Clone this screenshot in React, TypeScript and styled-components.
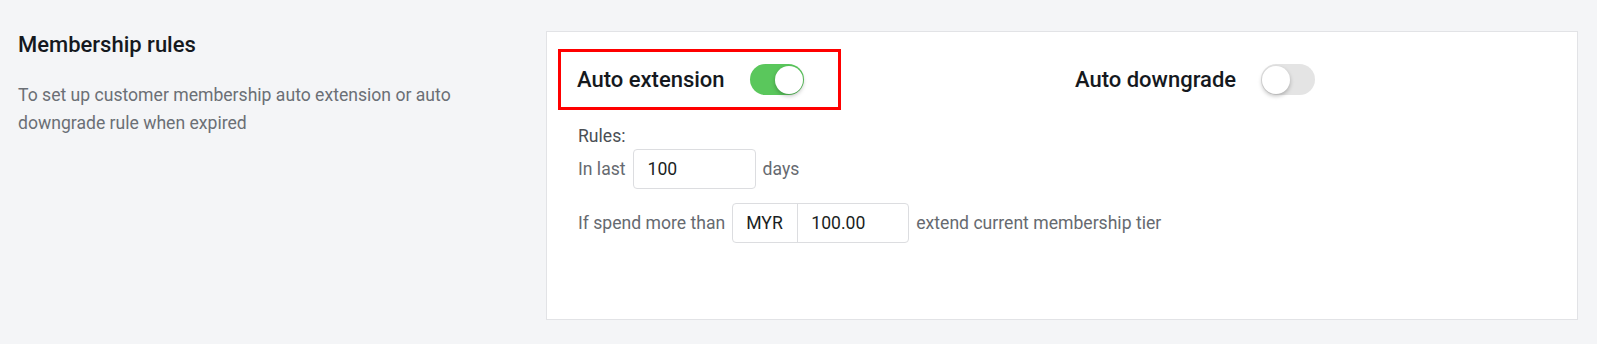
import styled, { createGlobalStyle } from "styled-components";

const GlobalStyle = createGlobalStyle`
  html, body {
    margin: 0;
    padding: 0;
    background: #f4f5f7;
    font-family: Roboto, "Liberation Sans", sans-serif;
  }
`;

const Page = styled.div`
  display: grid;
  grid-template-columns: 546px 1032px;
  padding-top: 31px;
  height: 344px;
  box-sizing: border-box;
`;

const Intro = styled.div`
  padding-left: 18px;
`;

const Title = styled.h2`
  margin: 0;
  font-size: 22px;
  line-height: 28px;
  font-weight: 500;
  color: #15191e;
`;

const Description = styled.p`
  margin: 23px 0 0;
  max-width: 450px;
  font-size: 17.6px;
  line-height: 27.5px;
  color: #6b6f75;
`;

const Panel = styled.section`
  background: #fff;
  border: 1px solid #e2e3e6;
  height: 289px;
  box-sizing: border-box;
  padding: 17px 11px 0;
`;

const ToggleRow = styled.div`
  display: grid;
  grid-template-columns: 495px 1fr;
  align-items: center;
`;

interface ToggleGroupProps {
  highlighted?: boolean;
}

const ToggleGroup = styled.div<ToggleGroupProps>`
  display: flex;
  align-items: center;
  gap: 25px;
  height: 61px;
  box-sizing: border-box;
  width: ${({ highlighted }) => (highlighted ? "283px" : "auto")};
  padding-left: ${({ highlighted }) => (highlighted ? "16px" : "19px")};
  border: 3px solid ${({ highlighted }) => (highlighted ? "#ff0000" : "transparent")};
`;

const ToggleLabel = styled.span`
  font-size: 22px;
  font-weight: 500;
  color: #15191e;
`;

interface SwitchProps {
  on: boolean;
}

const Switch = styled.span<SwitchProps>`
  position: relative;
  display: inline-block;
  width: 54px;
  height: 31px;
  border-radius: 16px;
  background: ${({ on }) => (on ? "#5ac75c" : "#e4e4e4")};

  &::after {
    content: "";
    position: absolute;
    top: 1.5px;
    left: ${({ on }) => (on ? "25px" : "1px")};
    width: 28px;
    height: 28px;
    border-radius: 50%;
    background: #fff;
    box-shadow: 0 2px 4px rgba(0, 0, 0, 0.25);
  }
`;

const Rules = styled.div`
  padding: 13px 0 0 20px;
  font-size: 17.6px;
  color: #666a70;
`;

const RulesTitle = styled.div`
  line-height: 26px;
  color: #4a4e54;
`;

interface RuleLineProps {
  spaced?: boolean;
}

const RuleLine = styled.div<RuleLineProps>`
  display: flex;
  align-items: center;
  gap: 7px;
  margin-top: ${({ spaced }) => (spaced ? "14px" : "0")};
`;

const TextBox = styled.div`
  width: 123px;
  height: 40px;
  box-sizing: border-box;
  border: 1px solid #dcdde0;
  border-radius: 4px;
  display: flex;
  align-items: center;
  padding-left: 14px;
  color: #1b1f24;
`;

const InputGroup = styled.div`
  display: flex;
  height: 40px;
  box-sizing: border-box;
  border: 1px solid #dcdde0;
  border-radius: 4px;
  color: #1b1f24;
`;

interface SegmentProps {
  width: number;
  divider?: boolean;
}

const Segment = styled.div<SegmentProps>`
  width: ${({ width }) => width}px;
  box-sizing: border-box;
  display: flex;
  align-items: center;
  padding-left: 13px;
  border-right: ${({ divider }) => (divider ? "1px solid #dcdde0" : "none")};
`;

const App = () => {
  return (
    <>
      <GlobalStyle />
      <Page>
        <Intro>
          <Title>Membership rules</Title>
          <Description>
            To set up customer membership auto extension or auto downgrade rule when expired
          </Description>
        </Intro>
        <Panel>
          <ToggleRow>
            <ToggleGroup highlighted>
              <ToggleLabel>Auto extension</ToggleLabel>
              <Switch on />
            </ToggleGroup>
            <ToggleGroup>
              <ToggleLabel>Auto downgrade</ToggleLabel>
              <Switch on={false} />
            </ToggleGroup>
          </ToggleRow>
          <Rules>
            <RulesTitle>Rules:</RulesTitle>
            <RuleLine>
              In last
              <TextBox>100</TextBox>
              days
            </RuleLine>
            <RuleLine spaced>
              If spend more than
              <InputGroup>
                <Segment width={65} divider>MYR</Segment>
                <Segment width={110}>100.00</Segment>
              </InputGroup>
              extend current membership tier
            </RuleLine>
          </Rules>
        </Panel>
      </Page>
    </>
  );
};

export default App;
